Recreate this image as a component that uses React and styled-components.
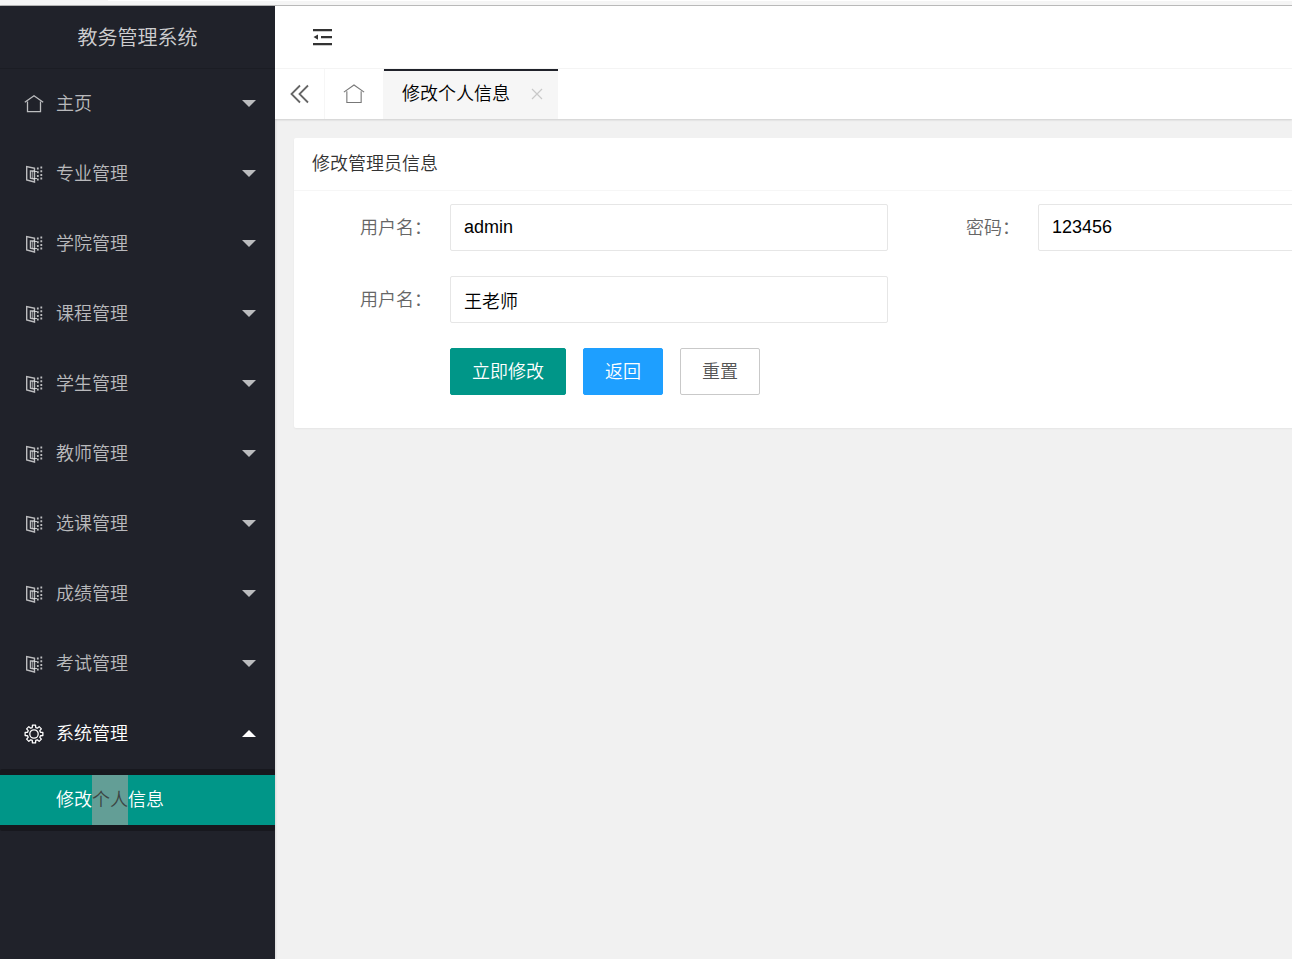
import { useState } from "react";
import styled, { createGlobalStyle, ThemeProvider } from "styled-components";

const theme = {
  colors: {
    dark: "#20222a",
    green: "#009688",
    blue: "#1e9fff",
    line: "#f6f6f6",
    page: "#f1f1f1"
  },
  fontSize: {
    m: "18px",
    l: "20px"
  }
};

const GlobalStyle = createGlobalStyle`
  *, *::before, *::after {
    box-sizing: border-box;
  }

  body {
    margin: 0;
    overflow: hidden;
    background: ${theme.colors.page};
  }

  body, button, input {
    font-family: "Liberation Sans", "Noto Sans CJK SC", sans-serif;
    font-size: ${theme.fontSize.m};
    font-weight: 350;
    line-height: 24px;
  }
`;

// Layout
const Page = styled.div`
  display: flex;
  flex-direction: column;
  height: 100vh;
`;

const TopStrip = styled.div`
  flex: none;
  height: 6px;
  padding-left: 108px;
  background: #f5f5f5;
  border-bottom: 1px solid #b9b9b9;
`;

const StripTab = styled.div`
  height: 1px;
  background: #fff;
`;

const Layout = styled.div`
  display: grid;
  flex: 1;
  grid-template-columns: 275px minmax(0, 1fr);
  min-height: 0;
`;

const Main = styled.main`
  display: flex;
  flex-direction: column;
  overflow: hidden;
`;

// Sidebar
const SideContainer = styled.aside`
  overflow: hidden;
  background: ${props => props.theme.colors.dark};
  box-shadow: 1px 0 2px rgba(0, 0, 0, 0.1);
`;

const Logo = styled.h1`
  height: 63px;
  margin: 0;
  border-bottom: 1px solid #1b1d24;
  color: rgba(255, 255, 255, 0.8);
  font-size: ${props => props.theme.fontSize["l"]};
  font-weight: 350;
  line-height: 64px;
  text-align: center;
`;

const NavButton = styled.button`
  display: flex;
  align-items: center;
  width: 100%;
  height: 70px;
  gap: 12px;
  padding: 0 19px 0 24px;
  border: 0;
  background: transparent;
  color: ${props => (props.$open ? "#fff" : "rgba(255, 255, 255, 0.7)")};
  text-align: left;
  cursor: pointer;
`;

const NavText = styled.span`
  flex: 1;
`;

const Caret = styled.svg`
  width: 14px;
  height: 8px;
  fill: currentColor;
`;

const SubMenu = styled.div`
  padding: 6px 0;
  border-radius: 2px;
  background: #17181e;
`;

const SubLink = styled.a`
  display: block;
  height: 50px;
  padding-left: 56px;
  background: ${props => props.theme.colors.green};
  color: #fff;
  line-height: 50px;
  text-decoration: none;
`;

const Marked = styled.mark`
  display: inline-block;
  background: #639e96;
  color: #3c4644;
`;

// Header and tabs
const Header = styled.header`
  display: flex;
  flex: none;
  align-items: center;
  height: 63px;
  padding: 0 36px;
  border-bottom: 1px solid ${props => props.theme.colors.line};
  background: #fff;
`;

const IconButton = styled.button`
  display: flex;
  align-items: center;
  justify-content: center;
  padding: 0;
  border: 0;
  background: transparent;
  color: ${props => props.$color || "#333"};
  cursor: pointer;
`;

const TabBar = styled.div`
  display: flex;
  flex: none;
  height: 50px;
  background: #fff;
  box-shadow: 0 1px 2px rgba(0, 0, 0, 0.15);
`;

const TabControl = styled(IconButton)`
  width: ${props => props.$width};
  border-right: 1px solid ${props => props.theme.colors.line};
`;

const Tab = styled.div`
  display: flex;
  align-items: center;
  justify-content: space-between;
  width: 174px;
  padding: 0 15px 2px 18px;
  border-top: 2px solid ${props => props.theme.colors.dark};
  background: ${props => props.theme.colors.line};
  color: #000;
`;

// Card and form
const Content = styled.section`
  padding: 19px 0 0 19px;
`;

const Card = styled.div`
  min-width: 1212px;
  border-radius: 2px;
  background: #fff;
  box-shadow: 0 1px 2px rgba(0, 0, 0, 0.05);
`;

const CardTitle = styled.h2`
  height: 53px;
  margin: 0;
  padding: 0 18px;
  border-bottom: 1px solid ${props => props.theme.colors.line};
  color: #333;
  font-size: ${props => props.theme.fontSize["m"]};
  font-weight: 350;
  line-height: 52px;
`;

const Form = styled.form`
  display: grid;
  grid-template-columns: repeat(2, minmax(588px, 1fr));
  row-gap: 25px;
  padding: 13px 18px 33px;
`;

const Field = styled.div`
  display: flex;
  align-items: center;
  grid-column-start: ${props => props.$column};
  padding-right: 12px;
`;

const Label = styled.label`
  width: 138px;
  padding-right: 18px;
  color: #666;
  text-align: right;
`;

const Input = styled.input`
  flex: 1;
  min-width: 0;
  height: 47px;
  padding: 0 13px;
  border: 1px solid #e6e6e6;
  border-radius: 2px;
  background: #fff;
  color: #000;
  outline: none;
`;

const Actions = styled.div`
  display: flex;
  grid-column: 1 / -1;
  gap: 17px;
  padding-left: 138px;
`;

const Button = styled.button`
  height: 47px;
  padding: 0 21px;
  border: 1px solid ${props => props.$border || props.$background};
  border-radius: 2px;
  background: ${props => props.$background};
  color: ${props => props.$color || "#fff"};
  cursor: pointer;
`;

function HomeIcon({ size = 20, stroke = 1.3 }) {
  return (
    <svg
      width={size}
      height={size}
      viewBox="0 0 20 20"
      fill="none"
      stroke="currentColor"
      strokeWidth={stroke}
    >
      <path d="M.8 8.3 10 1.8l9.2 6.500" />
      <path d="M3.500 7.500v10.200h13V7.500" />
    </svg>
  );
}

function BookIcon() {
  return (
    <svg width="20" height="20" viewBox="0 0 20 20" fill="none" stroke="currentColor">
      <path d="M10.500 4.200 2.700 2.500v13.500l7.800 2V4.200z" strokeWidth="1.400" />
      <path d="M10.500 7H6.500v7.200l4 .8" strokeWidth="1.500" />
      <path d="M8.600 7v7.500" strokeWidth="0.700" />
      <path d="M13.800 3.500v14M17.300 2.500v14.500" strokeWidth="1.800" strokeDasharray="2 1.700" />
      <path d="M10.500 7.500h2.500M10.500 14.500h2.500" strokeWidth="1.200" />
    </svg>
  );
}

// Eight-tooth cog, drawn from its outer and inner radius
const cogPoints = Array.from({ length: 8 }, (_, i) =>
  [
    [-15, 6.7],
    [-10, 9],
    [10, 9],
    [15, 6.7]
  ].map(([offset, r]) => {
    const a = ((i * 45 + offset) * Math.PI) / 180;
    return `${(10 + r * Math.sin(a)).toFixed(2)},${(10 - r * Math.cos(a)).toFixed(2)}`;
  })
)
  .flat()
  .join(" ");

function CogIcon() {
  return (
    <svg
      width="20"
      height="20"
      viewBox="0 0 20 20"
      fill="none"
      stroke="currentColor"
      strokeWidth="1.300"
      strokeLinejoin="round"
    >
      <polygon points={cogPoints} />
      <circle cx="10" cy="10" r="4.200" />
    </svg>
  );
}

function FoldIcon() {
  return (
    <svg width="22" height="20" viewBox="0 0 22 20" fill="currentColor">
      <path d="M2 2h19v2.200H2zM10 9h11v2.200H10zM2 16h19v2.200H2zM2.500 10.100 7 7.500v5.200z" />
    </svg>
  );
}

function BackIcon() {
  return (
    <svg width="20" height="20" viewBox="0 0 20 20" fill="none" stroke="currentColor" strokeWidth="1.800">
      <path d="M10 1.500 1.500 10l8.500 8.500M18 1.500 9.500 10l8.500 8.500" />
    </svg>
  );
}

function CloseIcon() {
  return (
    <svg width="12" height="12" viewBox="0 0 12 12" stroke="currentColor" strokeWidth="1.200">
      <path d="m1 1 10 10M11 1 1 11" />
    </svg>
  );
}

const menu = [
  { text: "主页", icon: <HomeIcon /> },
  { text: "专业管理", icon: <BookIcon /> },
  { text: "学院管理", icon: <BookIcon /> },
  { text: "课程管理", icon: <BookIcon /> },
  { text: "学生管理", icon: <BookIcon /> },
  { text: "教师管理", icon: <BookIcon /> },
  { text: "选课管理", icon: <BookIcon /> },
  { text: "成绩管理", icon: <BookIcon /> },
  { text: "考试管理", icon: <BookIcon /> },
  { text: "系统管理", icon: <CogIcon /> }
];

function Sidebar() {
  const [open, setOpen] = useState("系统管理");

  return (
    <SideContainer>
      <Logo>教务管理系统</Logo>
      <nav>
        {menu.map(({ text, icon }) => (
          <NavButton
            key={text}
            type="button"
            $open={open === text}
            aria-expanded={open === text}
            onClick={() => setOpen(open === text ? "" : text)}
          >
            {icon}
            <NavText>{text}</NavText>
            <Caret viewBox="0 0 14 8">
              <path d={open === text ? "M0 7h14L7 0z" : "M0 0h14L7 7z"} />
            </Caret>
          </NavButton>
        ))}
        {open === "系统管理" && (
          <SubMenu>
            <SubLink href="#">
              修改<Marked>个人</Marked>信息
            </SubLink>
          </SubMenu>
        )}
      </nav>
    </SideContainer>
  );
}

function TextField({ id, label, value, column }) {
  return (
    <Field $column={column}>
      <Label htmlFor={id}>{label}</Label>
      <Input id={id} type="text" defaultValue={value} />
    </Field>
  );
}

function App() {
  return (
    <ThemeProvider theme={theme}>
      <GlobalStyle />
      <Page>
        <TopStrip>
          <StripTab />
        </TopStrip>
        <Layout>
          <Sidebar />
          <Main>
            <Header>
              <IconButton type="button" aria-label="收起菜单">
                <FoldIcon />
              </IconButton>
            </Header>
            <TabBar>
              <TabControl type="button" aria-label="向左" $width="50px" $color="#666">
                <BackIcon />
              </TabControl>
              <TabControl type="button" aria-label="主页" $width="59px" $color="#777">
                <HomeIcon size={22} stroke={1} />
              </TabControl>
              <Tab>
                修改个人信息
                <IconButton type="button" aria-label="关闭" $color="#c9c9c9">
                  <CloseIcon />
                </IconButton>
              </Tab>
            </TabBar>
            <Content>
              <Card>
                <CardTitle>修改管理员信息</CardTitle>
                <Form onSubmit={e => e.preventDefault()}>
                  <TextField id="username" label="用户名：" value="admin" column={1} />
                  <TextField id="password" label="密码：" value="123456" column={2} />
                  <TextField id="name" label="用户名：" value="王老师" column={1} />
                  <Actions>
                    <Button type="submit" $background={theme.colors.green}>
                      立即修改
                    </Button>
                    <Button type="button" $background={theme.colors.blue}>
                      返回
                    </Button>
                    <Button type="reset" $background="#fff" $border="#c9c9c9" $color="#555">
                      重置
                    </Button>
                  </Actions>
                </Form>
              </Card>
            </Content>
          </Main>
        </Layout>
      </Page>
    </ThemeProvider>
  );
}

export default App;
